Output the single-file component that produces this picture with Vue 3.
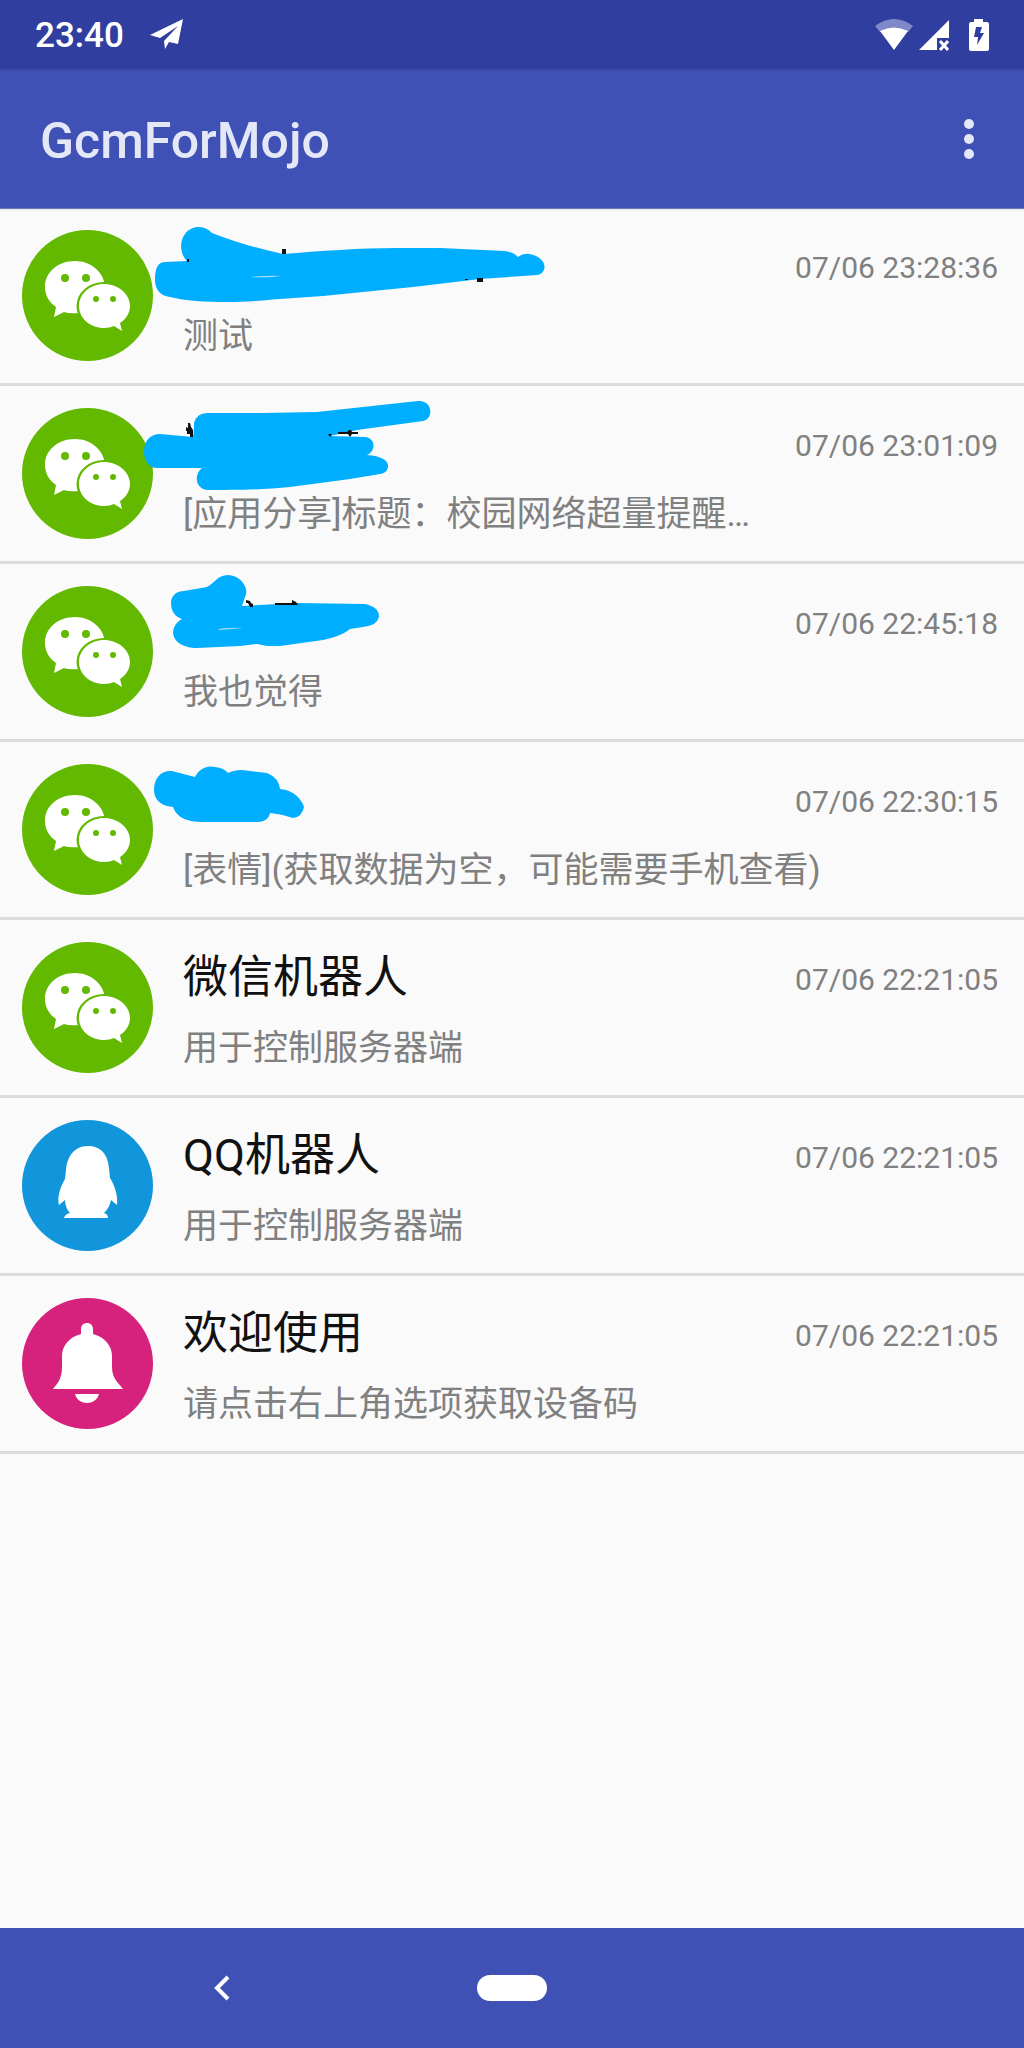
<script setup>
const messages = [
  {
    icon: 'wechat',
    title: '',
    text: '测试',
    time: '07/06 23:28:36',
    scribble:
      'M155 72C155 60 158 54 165 54L187 53C180 46 179 34 185 26C192 17 204 17 212 25C234 34 257 40 283 46C320 43 360 40 397 40L440 40L505 43Q514 44 518 49Q523 45 530 46C548 50 548 65 537 67L480 71L413 79L323 88L280 91C255 93 245 94 227 94C205 94 185 93 170 89C160 88 155 81 155 72Z',
    marks: 'M282 41h4v5h-4zM187 51h2v3h-2zM477 70h6v4h-6zM465 71h3v1h-3z',
    gap: 'M250 69Q268 67 282 68Q268 70 250 69Z'
  },
  {
    icon: 'wechat',
    title: '',
    text: '[应用分享]标题：校园网络超量提醒…',
    time: '07/06 23:01:09',
    scribble:
      'M144 66C144 54 151 48 160 48L193 51C194 47 194 40 194 37Q197 27 207 27L263 27L317 26L418 15C433 14 434 33 423 35L357 44L330 50L365 51C376 52 376 65 367 69C382 70 389 75 388 81Q387 87 380 88L350 93L290 101C262 104 230 104 207 104C196 103 193 89 202 82L157 82C149 82 144 74 144 66Z',
    marks: 'M188 37h2l1 4l2 3v7h-3v-3h-3v-3h-1v-4l2 1zM328 48h10v-2h9l2-2h2l1 2h6v2h-6l-2 3l-2-3h-16l-2 3z',
    gap: ''
  },
  {
    icon: 'wechat',
    title: '',
    text: '我也觉得',
    time: '07/06 22:45:18',
    scribble:
      'M171 39C171 32 176 27 184 27L207 23C214 20 217 11 228 11C240 11 250 24 245 33L242 42L297 39L365 40C374 42 379 46 379 52C378 60 370 62 363 63L350 65C341 72 331 74 323 76L280 82L267 82L257 80L240 82L197 84C184 84 173 78 173 68Q174 59 182 55C176 53 171 48 171 39Z',
    marks: 'M246 36l4 1l1 2l2 1v3h-3l-2-4h-2zM275 39h17v-3l4 2l2 3h-23z',
    gap: 'M218 65Q232 63 243 64Q230 65 220 66Z'
  },
  {
    icon: 'wechat',
    title: '',
    text: '[表情](获取数据为空，可能需要手机查看)',
    time: '07/06 22:30:15',
    scribble:
      'M154 48C154 35 162 28 172 29L195 35C199 27 207 23 215 25Q224 26 228 31Q234 28 242 28L267 31Q279 36 280 47C294 48 302 58 304 65Q302 75 293 76Q282 72 270 71C269 77 264 80 257 80L207 80C190 80 178 78 173 65C160 64 154 57 154 48Z',
    marks: '',
    gap: ''
  },
  { icon: 'wechat', title: '微信机器人', text: '用于控制服务器端', time: '07/06 22:21:05' },
  { icon: 'qq', title: 'QQ机器人', text: '用于控制服务器端', time: '07/06 22:21:05' },
  { icon: 'bell', title: '欢迎使用', text: '请点击右上角选项获取设备码', time: '07/06 22:21:05' }
]
</script>

<template>
  <div class="screen">
    <div class="status-bar">
      <span class="clock">23:40</span>
      <svg class="plane" width="36" height="32" viewBox="0 0 36 32" aria-hidden="true">
        <path fill="#fff" d="M1 16L34 0L29 25L20 23L16 30L15 22L29 7L11 19Z" />
      </svg>
      <div class="indicators">
        <svg width="38" height="34" viewBox="0 0 38 34" aria-hidden="true">
          <path fill="#8188c8" d="M0 8Q19-6 38 8L33 14H5Z" />
          <path fill="#fff" d="M5 13Q19 6 33 13L19 32Z" />
        </svg>
        <svg class="signal" width="30" height="34" viewBox="0 0 30 34" aria-hidden="true">
          <path fill="#fff" d="M0 32L30 2V20H18V32Z" />
          <path stroke="#fff" stroke-width="3" d="M21 23L29 32M29 23L21 32" />
        </svg>
        <svg class="battery" width="20" height="34" viewBox="0 0 20 34" aria-hidden="true">
          <path fill="#fff" fill-rule="evenodd" d="M5 1H14V4H18Q20 4 20 6V31Q20 33 18 33H2Q0 33 0 31V6Q0 4 2 4H5ZM7 9L5 19H9L8 27L15 15H11L13 9Z" />
        </svg>
      </div>
    </div>

    <header class="app-bar">
      <h1>GcmForMojo</h1>
      <button class="menu" type="button" aria-label="更多选项">
        <svg width="10" height="40" viewBox="0 0 10 40" aria-hidden="true">
          <g fill="#e4e7f6">
            <circle cx="5" cy="5" r="5" />
            <circle cx="5" cy="20" r="5" />
            <circle cx="5" cy="35" r="5" />
          </g>
        </svg>
      </button>
    </header>

    <ul class="list">
      <li v-for="(m, i) in messages" :key="i" class="row">
        <svg class="avatar" viewBox="0 0 131 131" aria-hidden="true">
          <template v-if="m.icon === 'wechat'">
            <circle cx="65.5" cy="65.5" r="65.5" fill="#62b900" />
            <path fill="#fff" d="M53 31C36 31 23 42 23 57C23 66 28 73 34 77L32 87L42 82Q47 84 58 83L83 57C82 42 69 31 53 31Z" />
            <ellipse cx="82" cy="76" rx="27.5" ry="24" fill="#62b900" />
            <path fill="#fff" d="M82 54C68 54 57 64 57 76C57 88 68 98 82 98Q88 98 92 96L100 101L98 93C104 89 108 83 108 76C108 64 96 54 82 54Z" />
            <g fill="#62b900">
              <circle cx="43" cy="48" r="4" />
              <circle cx="64" cy="48" r="4" />
              <circle cx="74" cy="69" r="3" />
              <circle cx="91" cy="69" r="3" />
            </g>
          </template>
          <template v-else-if="m.icon === 'qq'">
            <circle cx="65.5" cy="65.5" r="65.5" fill="#1296db" />
            <path fill="#fff" d="M66 26C52 26 45 37 44 50L43 59C38 67 35 78 37 85L43 80C43 85 45 90 48 93Q43 94 42 98H86Q86 94 82 93C86 89 88 85 89 80L95 85C96 76 93 66 88 58L87 48C86 36 80 26 66 26Z" />
          </template>
          <template v-else>
            <circle cx="65.5" cy="65.5" r="65.5" fill="#d6227c" />
            <path fill="#fff" d="M59 36V31C59 23 71 23 71 31V36C83 39 90 48 90 58V69C90 82 98 86 101 91H31C35 86 40 81 40 69V58C40 48 47 39 59 36ZM53 96H77C74 108 56 108 53 96Z" />
          </template>
        </svg>
        <div class="body">
          <div class="top">
            <h2 class="title">{{ m.title }}</h2>
            <time class="time">{{ m.time }}</time>
          </div>
          <p class="text">{{ m.text }}</p>
        </div>
        <svg v-if="m.scribble" class="scribble" width="600" height="175" viewBox="0 0 600 175" aria-hidden="true">
          <path fill="#00aeff" :d="m.scribble" />
          <path v-if="m.marks" fill="#111" :d="m.marks" />
          <path v-if="m.gap" fill="#a5e2fc" :d="m.gap" />
        </svg>
      </li>
    </ul>

    <nav class="nav-bar">
      <button class="back" type="button" aria-label="返回">
        <svg width="18" height="26" viewBox="0 0 18 26" aria-hidden="true">
          <path fill="none" stroke="#fff" stroke-width="4" d="M14 2L3 13L14 24" />
        </svg>
      </button>
      <button class="home" type="button" aria-label="主屏幕"><span class="pill"></span></button>
    </nav>
  </div>
</template>

<style>
body {
  margin: 0;
  background: #fafafa;
}
</style>

<style scoped>
.screen {
  display: flex;
  flex-direction: column;
  min-height: 100vh;
  background: #fafafa;
  font-family: Roboto, "Noto Sans CJK SC", sans-serif;
}

button {
  display: flex;
  align-items: center;
  justify-content: center;
  padding: 0;
  border: 0;
  background: none;
  cursor: pointer;
}

.status-bar {
  display: flex;
  align-items: center;
  height: 70px;
  padding: 0 35px;
  background: #303f9f;
}

.clock {
  padding-top: 2px;
  color: #fff;
  font-size: 35px;
  font-weight: 500;
  line-height: 40px;
}

.plane {
  margin-left: 25px;
}

.indicators {
  display: flex;
  margin-left: auto;
}

.signal {
  margin-left: 6px;
}

.battery {
  margin-left: 20px;
}

.app-bar {
  display: flex;
  align-items: center;
  justify-content: space-between;
  height: 138px;
  padding: 0 30px 0 40px;
  background: #3f51b5;
  box-shadow: 0 1px 0 #6f78ae, 0 2px 3px #e0e0ee;
  z-index: 1;
}

h1 {
  margin: 0;
  padding-top: 4px;
  color: #e4e7f6;
  font-size: 50px;
  font-weight: 500;
  line-height: 60px;
}

.menu {
  width: 50px;
  height: 80px;
}

.list {
  margin: 0;
  padding: 0;
  list-style: none;
}

.row {
  position: relative;
  display: flex;
  gap: 30px;
  padding: 22px 26px 22px 22px;
  border-bottom: 3px solid #dcdcdc;
}

.avatar {
  flex: none;
  width: 131px;
  height: 131px;
}

.body {
  flex: 1;
  min-width: 0;
  padding-top: 6px;
}

.top {
  display: flex;
  align-items: center;
  justify-content: space-between;
  height: 60px;
}

.title {
  margin: 0;
  color: #111;
  font-size: 45px;
  font-weight: 400;
  line-height: 60px;
}

.time {
  padding-top: 4px;
  color: #808080;
  font-size: 30px;
  line-height: 40px;
}

.text {
  margin: 17px 0 0;
  overflow: hidden;
  color: #808080;
  font-size: 35px;
  line-height: 48px;
  white-space: nowrap;
  text-overflow: ellipsis;
}

.scribble {
  position: absolute;
  top: 0;
  left: 0;
}

.nav-bar {
  display: grid;
  grid-template-columns: repeat(3, 1fr);
  height: 120px;
  margin-top: auto;
  padding: 0 78px;
  background: #3f51b5;
}

.pill {
  width: 70px;
  height: 26px;
  border-radius: 13px;
  background: #fff;
}
</style>
